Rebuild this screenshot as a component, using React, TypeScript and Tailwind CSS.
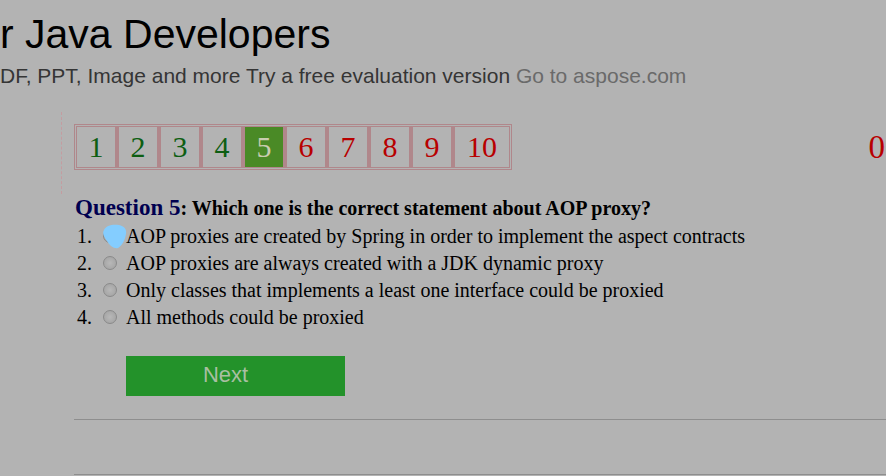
import React from "react";

const sans = "font-['Liberation_Sans',Arial,sans-serif]";
const serif = "font-['Liberation_Serif','Times_New_Roman',serif]";

const pages = [1, 2, 3, 4, 5, 6, 7, 8, 9, 10];

const options = [
  "AOP proxies are created by Spring in order to implement the aspect contracts",
  "AOP proxies are always created with a JDK dynamic proxy",
  "Only classes that implements a least one interface could be proxied",
  "All methods could be proxied",
];

function Cell({ n }: { n: number }) {
  const last = n === 10;
  const active = n === 5;
  const color = n < 5 ? "text-[#0d5e12]" : n === 5 ? "text-[#c9cdb0]" : "text-[#b80000]";
  return (
    <div
      className={`h-[42px] flex items-center justify-center border border-[#b0878b] ${
        last ? "w-[56px]" : "w-[42px] border-r-[3px]"
      }`}
    >
      <div
        className={`w-full h-full flex items-center justify-center text-[30px] leading-none ${color} ${
          active ? "bg-[#4a8a26]" : ""
        }`}
      >
        {n}
      </div>
    </div>
  );
}

export default function App() {
  return (
    <div className={`w-[886px] h-[476px] overflow-hidden bg-[#b3b3b3] ${sans}`}>
      <h1 className="pt-[11px] text-[41px] leading-[46px] text-black whitespace-nowrap">r Java Developers</h1>
      <p className="mt-[7px] text-[21px] leading-[24px] text-[#353535] whitespace-nowrap">
        DF, PPT, Image and more Try a free evaluation version <span className="text-[#6a6a6a]">Go to aspose.com</span>
      </p>

      <div className={`flex items-start mt-[24px] ${serif}`}>
        <div className="ml-[61px] border-l border-dashed border-[#c49ca0] pl-[12px] pt-[12px] pb-[24px]">
          <div className="flex border border-[#b0878b] p-[1px]">
            {pages.map((n) => (
              <Cell key={n} n={n} />
            ))}
          </div>
        </div>
        <div className="ml-auto mt-[14px] mr-[1px] text-[33px] leading-[42px] text-[#b80000]">0</div>
      </div>

      <div className={`ml-[75px] ${serif}`}>
        <div className="text-[23px] leading-[28px] font-bold whitespace-nowrap">
          <span className="text-[#000050]">Question 5</span>
          <span className="text-[20px] text-black">: Which one is the correct statement about AOP proxy?</span>
        </div>
        <div>
          {options.map((o, i) => (
            <div key={i} className="flex items-center h-[27px] text-[20px] text-black whitespace-nowrap">
              <span className="w-[28px] pl-[2px]">{i + 1}.</span>
              <span className="relative w-[14px] h-[14px] rounded-full border border-[#8a8a8a] bg-[radial-gradient(circle,#b8b8b8,#a0a0a0)]">
                {i === 0 && (
                  <svg
                    className="absolute left-[-3px] top-[-6px]"
                    width="26"
                    height="25"
                    viewBox="0 0 26 25"
                  >
                    <path
                      d="M3 6 C5 1 12 0 18 1 C23 2 26 5 25 10 C24 16 21 22 17 24 C13 25 9 22 6 17 C3 13 1 9 3 6 Z"
                      fill="#84cdff"
                    />
                  </svg>
                )}
              </span>
              <span className="ml-[9px]">{o}</span>
            </div>
          ))}
        </div>
        <button
          className={`mt-[26px] ml-[51px] w-[219px] h-[40px] pr-[20px] pb-[3px] bg-[#23922a] text-[#a9bfa2] text-[22px] ${sans}`}
        >
          Next
        </button>
      </div>

      <div className="ml-[74px] mt-[23px] border-t border-[#8e8e8e] h-[55px]" />
      <div className="ml-[74px] border-t border-[#8e8e8e]" />
    </div>
  );
}
